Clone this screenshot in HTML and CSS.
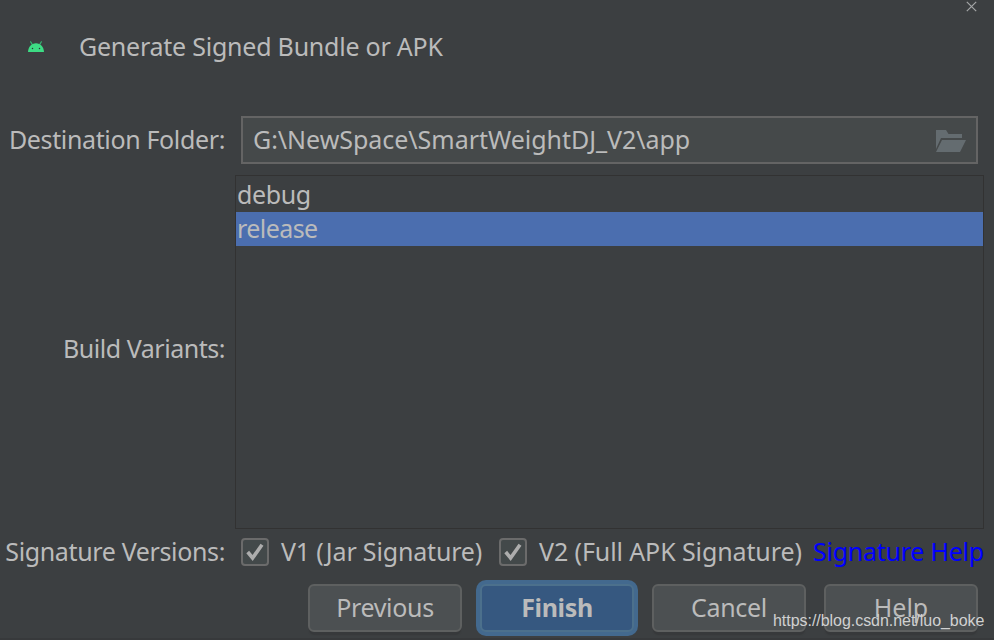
FILE: index.html
```html
<!DOCTYPE html>
<html lang="en">
<head>
<meta charset="utf-8">
<title>Generate Signed Bundle or APK</title>
<link rel="stylesheet" href="styles.css">
</head>
<body>
<main class="dialog">
  <header class="header">
    <svg class="android" width="16" height="11" viewBox="0 0 16 11">
      <path d="M4.300 3.500 2.600.8M11.700 3.500 13.400.8" stroke="#35b873" stroke-width="1.200" stroke-linecap="round"/>
      <path d="M0 11C.2 6 3.400 2.300 8 2.300S15.800 6 16 11Z" fill="#3ddc84"/>
      <circle cx="4.500" cy="7.500" r=".75" fill="#30343a"/><circle cx="11.500" cy="7.500" r=".75" fill="#30343a"/>
    </svg>
    <h1 class="title">Generate Signed Bundle or APK</h1>
    <svg class="close" width="11" height="11" viewBox="0 0 11 11"><path d="M.8.8 10.200 10.200M10.200.8.8 10.200" stroke="#a4a6a7" stroke-width="1.200"/></svg>
  </header>
  <section class="form">
    <label class="label destination">Destination Folder:</label>
    <div class="field">
      <span class="path">G:\NewSpace\SmartWeightDJ_V2\app</span>
      <svg class="folder" width="30" height="22" viewBox="0 0 30 22"><path d="M0 0H10L12.500 4H26V8H5L0 19Z M6 10H30L24 22H0Z" fill="#646c70"/></svg>
    </div>
    <label class="label variants">Build Variants:</label>
    <div class="list">
      <div class="item">debug</div>
      <div class="item selected">release</div>
    </div>
    <label class="label versions">Signature Versions:</label>
    <div class="signatures">
      <span class="check"><svg width="18" height="18" viewBox="0 0 18 18"><path d="M1.700 9 6.600 15 16 1.800" fill="none" stroke="#adadad" stroke-width="3.600"/></svg></span>
      <span class="v1">V1 (Jar Signature)</span>
      <span class="check"><svg width="18" height="18" viewBox="0 0 18 18"><path d="M1.700 9 6.600 15 16 1.800" fill="none" stroke="#adadad" stroke-width="3.600"/></svg></span>
      <span class="v2">V2 (Full APK Signature)</span>
      <a class="help-link">Signature Help</a>
    </div>
  </section>
  <footer class="actions">
    <div class="button">Previous</div>
    <div class="button primary">Finish</div>
    <div class="button">Cancel</div>
    <div class="button help">Help</div>
  </footer>
  <div class="watermark">https://blog.csdn.net/luo_boke</div>
</main>
</body>
</html>
```
FILE: styles.css
```css
* { box-sizing: border-box; }
body { margin: 0; background: #3c3f41; color: #bbbbbb; font: 25px/34px "Noto Sans", "Open Sans", sans-serif; white-space: nowrap; }
svg { display: block; flex: none; }
.dialog { position: relative; width: 994px; height: 640px; overflow: hidden; border-bottom: 2px solid #37393b; }
.header { display: flex; align-items: flex-start; height: 116px; padding-left: 28px; }
.android { margin-top: 41px; }
.title { margin: 29px 0 0 35px; width: 364px; font-size: 25px; font-weight: 400; letter-spacing: -0.23px; }
.close { margin: 1px 0 0 523px; }
.form { display: grid; grid-template-columns: 225px 749px; column-gap: 10px; grid-template-rows: 48px 354px 28px; row-gap: 10px; }
.label { display: flex; justify-content: flex-end; align-items: center; padding-bottom: 2px; }
.destination { letter-spacing: -0.36px; }
.field { display: flex; align-items: center; justify-content: space-between; width: 737px; margin-left: 6px; padding: 0 10px; border: 2px solid #646464; background: #45494a; }
.path { letter-spacing: -0.03px; padding-bottom: 2px; }
.folder { margin-top: 2px; }
.variants { padding-bottom: 6px; letter-spacing: -0.47px; }
.versions { letter-spacing: -0.36px; }
.list { border: 1px solid #323232; padding-top: 2px; margin-top: 1px; margin-bottom: -1px; }
.item { height: 34px; padding-left: 1px; line-height: 32px; letter-spacing: -0.4px; }
.selected { background: #4b6eaf; letter-spacing: -0.57px; }
.signatures { display: flex; align-items: center; margin-left: 6px; }
.check { display: grid; place-items: center; flex: none; width: 28px; height: 28px; border: 2px solid #6b6b6b; border-radius: 4px; background: #43494a; }
.v1, .v2, .help-link { flex: none; padding-bottom: 2px; }
.v1 { width: 218px; margin-left: 12px; letter-spacing: -0.17px; }
.v2 { width: 274px; margin-left: 12px; letter-spacing: -0.1px; }
.help-link { color: #0000ff; letter-spacing: -0.25px; }
.actions { display: flex; justify-content: flex-end; gap: 18px; margin-top: 18px; padding-right: 16px; }
.button { display: flex; justify-content: center; align-items: center; width: 154px; height: 48px; padding-bottom: 2px; border: 2px solid #5e6060; border-radius: 6px; background: #4c5052; box-shadow: 0 4px 1px -1px #37393b; letter-spacing: -0.33px; }
.primary { border-color: #4c708c; background: #365880; box-shadow: 0 0 0 4px #43698e; font-weight: 700; }
.help { letter-spacing: 0; }
.watermark { position: absolute; left: 773px; top: 611px; font: 16px/20px "Liberation Sans", sans-serif; letter-spacing: -0.04px; color: #d0d1d1; }
```
